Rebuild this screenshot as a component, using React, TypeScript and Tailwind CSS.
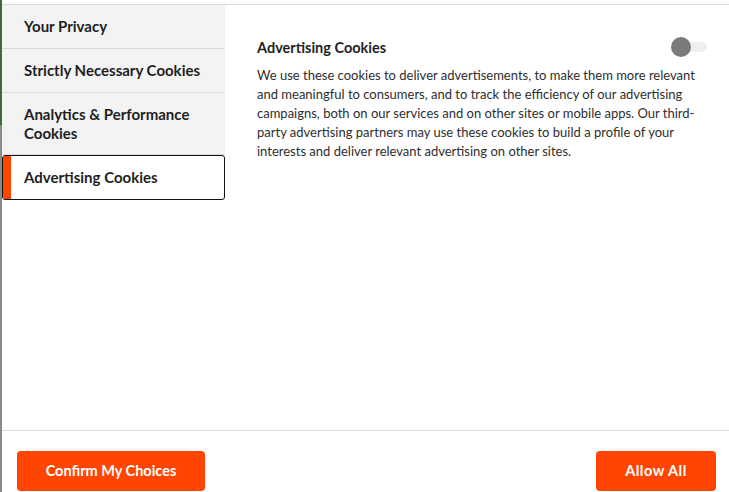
const navItems = [
    { label: 'Your Privacy', active: false, pad: 'pt-[12px] pb-[12px]' },
    { label: 'Strictly Necessary Cookies', active: false, pad: 'pt-[12px] pb-[12px]' },
    { label: 'Analytics & Performance Cookies', active: false, pad: 'pt-[12px] pb-[11px]' },
    { label: 'Advertising Cookies', active: true, pad: 'py-[12px]' },
]

export default function App() {
    return (
        <div className="flex h-[492px] w-[729px] overflow-hidden bg-white font-['Lato','Liberation_Sans',sans-serif] text-[#1f1f1f]">
            {/* page behind the modal */}
            <div className="flex w-[2px] flex-col">
                <div className="h-[125px] bg-[#3d6b3a]" />
                <div className="flex-1 bg-[#8a8a8a]" />
            </div>

            <div className="flex flex-1 flex-col">
                <div className="mt-[4px] flex flex-1 border-t border-[#dcdcdc]">
                    {/* Nav */}
                    <div className="w-[223px]">
                        {navItems.map((item) =>
                            item.active ? (
                                <div
                                    key={item.label}
                                    className={`relative rounded-[3px] border border-[#111] bg-white pl-[21px] pr-4 text-[15px] font-bold leading-[19px] ${item.pad}`}
                                >
                                    <div className="absolute bottom-0 left-0 top-0 w-[8px] bg-[#ff4500]" />
                                    {item.label}
                                </div>
                            ) : (
                                <div
                                    key={item.label}
                                    className={`border-b border-[#dcdcdc] bg-[#f3f3f3] pl-[22px] pr-4 text-[15px] font-bold leading-[19px] ${item.pad}`}
                                >
                                    {item.label}
                                </div>
                            ),
                        )}
                    </div>

                    {/* Detail */}
                    <div className="flex-1 pl-[32px] pr-[21px] pt-[32px]">
                        <div className="flex items-center justify-between">
                            <h3 className="text-[14.5px] font-bold leading-[19px]">Advertising Cookies</h3>
                            <div className="relative mr-[1px] h-[20px] w-[36px]">
                                <div className="absolute left-[8px] right-0 top-[5px] h-[10px] rounded-full bg-[#efefef]" />
                                <div className="absolute left-0 top-0 h-[20px] w-[20px] rounded-full bg-[#7b7b7b]" />
                            </div>
                        </div>
                        <p className="mt-[9px] text-[13px] leading-[19px] text-[#2e2e2e]">
                            We use these cookies to deliver advertisements, to make them more relevant and meaningful to
                            consumers, and to track the efficiency of our advertising campaigns, both on our services
                            and on other sites or mobile apps. Our third-party advertising partners may use these
                            cookies to build a profile of your interests and deliver relevant advertising on other
                            sites.
                        </p>
                    </div>
                </div>

                {/* Footer */}
                <div className="flex h-[62px] items-start justify-between border-t border-[#dcdcdc] pl-[15px] pr-[13px] pt-[20px]">
                    <button className="h-[40px] w-[188px] rounded-[4px] bg-[#ff4500] text-[14.5px] font-bold text-white">
                        Confirm My Choices
                    </button>
                    <button className="h-[40px] w-[120px] rounded-[4px] bg-[#ff4500] text-[14.5px] font-bold tracking-[0.5px] text-white">
                        Allow All
                    </button>
                </div>
            </div>
        </div>
    )
}
